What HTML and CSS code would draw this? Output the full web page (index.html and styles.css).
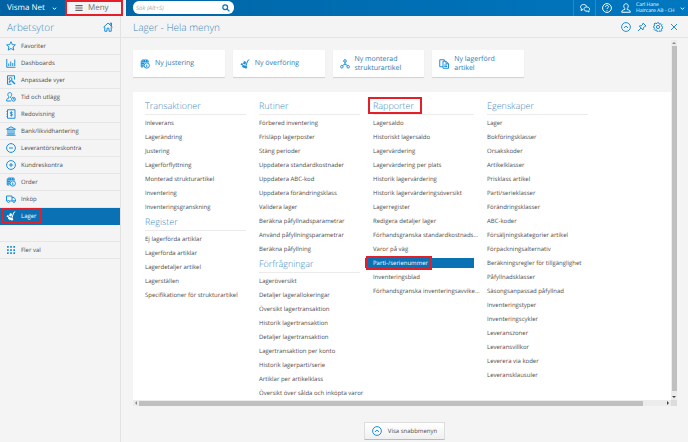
FILE: index.html
```html
<!DOCTYPE html>
<html lang="sv">
<head>
<meta charset="utf-8">
<title>Visma Net - Lager</title>
<link rel="stylesheet" href="styles.css">
</head>
<body>

<svg class="defs" aria-hidden="true">
	<symbol id="i-star" viewBox="0 0 20 20"><path d="M10 1.500l2.600 5.700 6.200.6-4.700 4.200 1.500 6.200L10 15l-5.600 3.200L5.900 12 1.200 7.800l6.200-.6z"/></symbol>
	<symbol id="i-chart" viewBox="0 0 20 20"><path d="M1.500 2v16.500h17.500M5.500 16v-5M9.500 16V7M13.500 16v-6M17.500 16V3"/></symbol>
	<symbol id="i-view" viewBox="0 0 20 20"><path d="M17 9V1.500H3v17h8"/><circle cx="9" cy="8" r="3"/><path d="M11 11l7 7M6 15l3-3" stroke-width="3"/></symbol>
	<symbol id="i-time" viewBox="0 0 20 20"><path d="M7.500 1.200c5 0 4.500 6 1.800 8.500v2.300M7.500 1.200c-5 0-4.500 6-1.800 8.500v2.300c-3 1-4.500 1.500-4.500 6h9"/><circle cx="15" cy="14.500" r="3.800"/><path d="M15 12.500v2h2"/></symbol>
	<symbol id="i-book" viewBox="0 0 20 20"><path d="M3 1.500h15v17H3zM1 5h3M1 10h3M1 15h3"/><path d="M13 7c-1-1.400-4.500-1.200-4.500.9s4.500 1.400 4.500 3.600-3.700 2.200-4.700.6M10.700 5v10"/></symbol>
	<symbol id="i-bank" viewBox="0 0 20 20"><path d="M1 6.500L10 1.500l9 5zM1 18.500h18M3 16h14M4 7v8.500M8 7v8.500M12 7v8.500M16 7v8.500"/></symbol>
	<symbol id="i-minus" viewBox="0 0 20 20"><circle cx="10" cy="10" r="8.800"/><path d="M6 10h8"/></symbol>
	<symbol id="i-plus" viewBox="0 0 20 20"><circle cx="10" cy="10" r="8.800"/><path d="M6 10h8M10 6v8"/></symbol>
	<symbol id="i-order" viewBox="0 0 20 20"><path d="M6 16H2.500V5l2-3h11l1 3v2M2.500 5.500h14M6 2v14M2.500 9H8M2.500 12.500H7M9 2v5M13 2v4"/><circle cx="13.500" cy="13" r="5.300"/><path d="M13.500 10v.8M13.500 12v4"/></symbol>
	<symbol id="i-truck" viewBox="0 0 20 20"><path d="M3 14H1V4h11v10H7M12 7h4l3 4v3h-1M12 14h2"/><circle cx="5" cy="15" r="2"/><circle cx="16" cy="15" r="2"/></symbol>
	<symbol id="i-stock" viewBox="0 0 20 20"><path d="M18.500 1.500l-3 1.500-4 12-4 2.500"/><path class="fill" d="M8 4l4.500 2-2 5.500-4.500-2zM3 8l3 1.500-1 3.500L1 11.500zM5.500 11.500l5 2-1.500 4.500-5-2zM12 14a2.500 2.500 0 1 1-.1 5 2.500 2.500 0 0 1 .1-5z"/></symbol>
	<symbol id="i-grid" viewBox="0 0 20 20"><path class="fill" d="M2 2h3.500v3.500H2zM8.300 2h3.500v3.500H8.300zM14.600 2h3.500v3.500h-3.500zM2 8.300h3.500v3.500H2zM8.300 8.300h3.500v3.500H8.300zM14.600 8.300h3.500v3.500h-3.500zM2 14.600h3.500v3.500H2zM8.300 14.600h3.500v3.500H8.300zM14.600 14.600h3.500v3.500h-3.500z"/></symbol>
	<symbol id="i-home" viewBox="0 0 20 20"><path d="M1 10.500L10 2l9 8.500M3.500 9v9.500H8v-6h4v6h4.500V9M14.500 5.500V2H17v6"/></symbol>
	<symbol id="i-tree" viewBox="0 0 20 20"><circle cx="10" cy="4" r="2.600"/><circle cx="3.700" cy="15.500" r="2.600"/><circle cx="16.300" cy="15.500" r="2.600"/><path d="M10 6.600v4M5 13l5-3 5 3"/></symbol>
	<symbol id="i-copy" viewBox="0 0 20 20"><path d="M8 15.500H1.500v-14h9V4M8 4.500h6l5 5v9H8zM14 4.500v5h5M10.500 12h6M10.500 15h6"/></symbol>
	<symbol id="i-up" viewBox="0 0 20 20"><circle cx="10" cy="10" r="8.800"/><path d="M6 11.800l4-3.600 4 3.600"/></symbol>
	<symbol id="i-pin" viewBox="0 0 20 20"><path d="M12 2l6 6-2 .5-3.500 3.500-.5 4L4.500 8l4-.5L12 4zM8 12l-6 6"/></symbol>
	<symbol id="i-gear" viewBox="0 0 20 20"><path d="M8.500 1h3l.5 2.300 2 .8 2-1.300 2 2-1.200 2.200.8 1.800 2.200.5v2.400l-2.200.6-.8 2 1.200 2-2.100 2-2-1.200-1.900.8-.5 2.400h-3L8 16l-2-.8-2 1.300-2-2 1.200-2.200-.8-1.900L.5 10V8l2-.4.8-2L2 3.500l2.200-2L6 2.800l2-.6z" transform="translate(0 .5)"/><circle cx="10" cy="10" r="3.200"/></symbol>
	<symbol id="i-close" viewBox="0 0 20 20"><path d="M4 4l12 12M16 4L4 16"/></symbol>
	<symbol id="i-chat" viewBox="0 0 20 20"><path d="M6 13l-4 2 1-3.500C-1 8 2 3 7 3c4 0 6 2 6 4"/><path d="M13 8c7 0 7.500 5.500 4.500 7.500l.5 2.500-3-1.500C6 17 6 8 13 8z"/></symbol>
	<symbol id="i-help" viewBox="0 0 20 20"><circle cx="10" cy="10" r="8.800"/><path d="M7 8c0-4 6-4 6-.5 0 2-3 2.200-3 4.500M10 14v1.500"/></symbol>
	<symbol id="i-user" viewBox="0 0 20 20"><path d="M7.500 11C4 7 5.500 1.500 10 1.500S16 7 12.500 11v2c4 1 6 1.500 6 5.500h-17c0-4 2-4.500 6-5.500z"/></symbol>
	<symbol id="i-search" viewBox="0 0 20 20"><circle cx="8" cy="8" r="6"/><path d="M12.500 12.500l6 6"/></symbol>
	<symbol id="i-down" viewBox="0 0 20 20"><path d="M3 7l7 6 7-6"/></symbol>
	<symbol id="i-bars" viewBox="0 0 20 20"><path d="M1 4h18M1 10h18M1 16h18"/></symbol>
</svg>

<header class="topbar">
	<button class="brand">Visma Net <svg class="icon tiny"><use href="#i-down"/></svg></button>
	<div class="menu-wrap">
		<button class="menu mark"><svg class="icon small"><use href="#i-bars"/></svg>Meny</button>
	</div>
	<form class="search">
		<input type="text" aria-label="Sök" placeholder="Sök (Alt+S)">
		<svg class="icon small"><use href="#i-search"/></svg>
	</form>
	<div class="tools">
		<button aria-label="Meddelanden"><svg class="icon"><use href="#i-chat"/></svg></button>
		<button aria-label="Hjälp"><svg class="icon"><use href="#i-help"/></svg></button>
		<button class="user"><svg class="icon"><use href="#i-user"/></svg><span>Carl Hane<br>Haircare AB - CH</span><svg class="icon tiny"><use href="#i-down"/></svg></button>
	</div>
</header>

<div class="layout">
	<aside class="sidebar">
		<div class="bar">
			<h2 class="title">Arbetsytor</h2>
			<a href="#" class="home" aria-label="Hem"><svg class="icon"><use href="#i-home"/></svg></a>
		</div>
		<nav class="areas">
			<a href="#"><svg class="icon"><use href="#i-star"/></svg>Favoriter</a>
			<a href="#"><svg class="icon"><use href="#i-chart"/></svg>Dashboards</a>
			<a href="#"><svg class="icon"><use href="#i-view"/></svg>Anpassade vyer</a>
			<a href="#"><svg class="icon"><use href="#i-time"/></svg>Tid och utlägg</a>
			<a href="#"><svg class="icon"><use href="#i-book"/></svg>Redovisning</a>
			<a href="#"><svg class="icon"><use href="#i-bank"/></svg>Bank/likvidhantering</a>
			<a href="#"><svg class="icon"><use href="#i-minus"/></svg>Leverantörsreskontra</a>
			<a href="#"><svg class="icon"><use href="#i-plus"/></svg>Kundreskontra</a>
			<a href="#"><svg class="icon"><use href="#i-order"/></svg>Order</a>
			<a href="#"><svg class="icon"><use href="#i-truck"/></svg>Inköp</a>
			<a href="#" class="active"><span class="mark"><svg class="icon"><use href="#i-stock"/></svg>Lager</span></a>
			<div class="spacer"></div>
			<a href="#"><svg class="icon"><use href="#i-grid"/></svg>Fler val</a>
		</nav>
	</aside>

	<main class="main">
		<div class="bar">
			<h1 class="title">Lager - Hela menyn</h1>
			<div class="actions">
				<button aria-label="Fäll ihop"><svg class="icon"><use href="#i-up"/></svg></button>
				<button aria-label="Fäst"><svg class="icon"><use href="#i-pin"/></svg></button>
				<button aria-label="Inställningar"><svg class="icon"><use href="#i-gear"/></svg></button>
				<button aria-label="Stäng"><svg class="icon"><use href="#i-close"/></svg></button>
			</div>
		</div>

		<div class="scroller">
			<div class="content">
				<div class="cards">
					<a href="#" class="card"><svg class="icon"><use href="#i-order"/></svg>Ny justering</a>
					<a href="#" class="card"><svg class="icon"><use href="#i-stock"/></svg>Ny överföring</a>
					<a href="#" class="card"><svg class="icon"><use href="#i-tree"/></svg>Ny monterad<br>strukturartikel</a>
					<a href="#" class="card"><svg class="icon"><use href="#i-copy"/></svg>Ny lagerförd<br>artikel</a>
				</div>
				<div class="panel">
					<section class="column">
						<h3>Transaktioner</h3>
						<ul>
							<li><a href="#">Inleverans</a></li>
							<li><a href="#">Lagerändring</a></li>
							<li><a href="#">Justering</a></li>
							<li><a href="#">Lagerförflyttning</a></li>
							<li><a href="#">Monterad strukturartikel</a></li>
							<li><a href="#">Inventering</a></li>
							<li><a href="#">Inventeringsgranskning</a></li>
						</ul>
						<h3>Register</h3>
						<ul>
							<li><a href="#">Ej lagerförda artiklar</a></li>
							<li><a href="#">Lagerförda artiklar</a></li>
							<li><a href="#">Lagerdetaljer artikel</a></li>
							<li><a href="#">Lagerställen</a></li>
							<li><a href="#">Specifikationer för strukturartikel</a></li>
						</ul>
					</section>
					<section class="column">
						<h3>Rutiner</h3>
						<ul>
							<li><a href="#">Förbered inventering</a></li>
							<li><a href="#">Frisläpp lagerposter</a></li>
							<li><a href="#">Stäng perioder</a></li>
							<li><a href="#">Uppdatera standardkostnader</a></li>
							<li><a href="#">Uppdatera ABC-kod</a></li>
							<li><a href="#">Uppdatera förändringsklass</a></li>
							<li><a href="#">Validera lager</a></li>
							<li><a href="#">Beräkna påfyllnadsparametrar</a></li>
							<li><a href="#">Använd påfyllningsparametrar</a></li>
							<li><a href="#">Beräkna påfyllning</a></li>
						</ul>
						<h3>Förfrågningar</h3>
						<ul>
							<li><a href="#">Lageröversikt</a></li>
							<li><a href="#">Detaljer lagerallokeringar</a></li>
							<li><a href="#">Översikt lagertransaktion</a></li>
							<li><a href="#">Historik lagertransaktion</a></li>
							<li><a href="#">Detaljer lagertransaktion</a></li>
							<li><a href="#">Lagertransaktion per konto</a></li>
							<li><a href="#">Historik lagerparti/serie</a></li>
							<li><a href="#">Artiklar per artikelklass</a></li>
							<li><a href="#">Översikt över sålda och inköpta varor</a></li>
						</ul>
					</section>
					<section class="column">
						<h3><span class="mark">Rapporter</span></h3>
						<ul>
							<li><a href="#">Lagersaldo</a></li>
							<li><a href="#">Historiskt lagersaldo</a></li>
							<li><a href="#">Lagervärdering</a></li>
							<li><a href="#">Lagervärdering per plats</a></li>
							<li><a href="#">Historik lagervärdering</a></li>
							<li><a href="#">Historik lagervärderingsöversikt</a></li>
							<li><a href="#">Lagerregister</a></li>
							<li><a href="#">Redigera detaljer lager</a></li>
							<li><a href="#">Förhandsgranska standardkostnads...</a></li>
							<li><a href="#">Varor på väg</a></li>
							<li class="selected"><a href="#" class="mark">Parti-/serienummer</a></li>
							<li><a href="#">Inventeringsblad</a></li>
							<li><a href="#">Förhandsgranska inventeringsavvike...</a></li>
						</ul>
					</section>
					<section class="column">
						<h3>Egenskaper</h3>
						<ul>
							<li><a href="#">Lager</a></li>
							<li><a href="#">Bokföringsklasser</a></li>
							<li><a href="#">Orsakskoder</a></li>
							<li><a href="#">Artikelklasser</a></li>
							<li><a href="#">Prisklass artikel</a></li>
							<li><a href="#">Parti/serieklasser</a></li>
							<li><a href="#">Förändringsklasser</a></li>
							<li><a href="#">ABC-koder</a></li>
							<li><a href="#">Försäljningskategorier artikel</a></li>
							<li><a href="#">Förpackningsalternativ</a></li>
							<li><a href="#">Beräkningsregler för tillgänglighet</a></li>
							<li><a href="#">Påfyllnadsklasser</a></li>
							<li><a href="#">Säsongsanpassad påfyllnad</a></li>
							<li><a href="#">Inventeringstyper</a></li>
							<li><a href="#">Inventeringscykler</a></li>
							<li><a href="#">Leveranszoner</a></li>
							<li><a href="#">Leveransvillkor</a></li>
							<li><a href="#">Leverera via koder</a></li>
							<li><a href="#">Leveransklausuler</a></li>
						</ul>
					</section>
				</div>
			</div>
			<div class="vbar"><i class="arrow up"></i><span></span><i class="arrow down"></i></div>
			<div class="hbar"><i class="arrow left"></i><span></span><i class="arrow right"></i></div>
			<div class="corner"></div>
		</div>

		<footer class="footer">
			<button class="quick"><svg class="icon"><use href="#i-up"/></svg>Visa snabbmenyn</button>
		</footer>
	</main>
</div>

</body>
</html>
```
FILE: styles.css
```css
* {
	box-sizing: border-box;
}

body {
	margin: 0;
	min-height: 100vh;
	display: flex;
	flex-direction: column;
	background: #f4f4f4;
	color: #4c4c4c;
	font: 6px/10px "Open Sans", "Noto Sans", sans-serif;
	text-rendering: geometricPrecision;
}

h1, h2, h3, ul {
	margin: 0;
	padding: 0;
	list-style: none;
}

h1, h2, h3 {
	font-weight: 300;
}

a {
	color: inherit;
	text-decoration: none;
}

button {
	display: flex;
	align-items: center;
	padding: 0;
	border: 0;
	background: none;
	color: inherit;
	font: inherit;
	text-rendering: inherit;
}

.defs {
	display: none;
}

.icon {
	flex: none;
	width: 10px;
	height: 10px;
	fill: none;
	color: #1c8fdb;
	stroke: currentColor;
	stroke-width: 2;
}

.fill {
	fill: currentColor;
	stroke: none;
}

.small {
	width: 8px;
	height: 8px;
}

.tiny {
	width: 5px;
	height: 5px;
	stroke-width: 4;
}

.mark {
	border: 2px solid #e3202a;
}

/* top bar */
.topbar {
	display: flex;
	height: 16px;
	background: linear-gradient(90deg, #0062a2, #0077c0);
	color: #fff;
}

.topbar .icon {
	color: #fff;
}

.brand {
	width: 65px;
	padding-left: 7px;
	gap: 7px;
	font-size: 8px;
}

.menu-wrap {
	width: 61px;
	background: #f4f4f4;
}

.menu {
	width: 58px;
	height: 16px;
	padding-left: 8px;
	gap: 5px;
	border: 2px solid #e3202a;
	color: #707070;
	font-size: 8px;
}

.topbar .menu .icon {
	color: #666;
	stroke-width: 3;
}

.search {
	display: flex;
	align-items: center;
	width: 101px;
	height: 13px;
	margin: 1px 0 0 7px;
	padding: 0 4px 0 3px;
	border-radius: 6px;
	background: #fff;
}

.search input {
	flex: 1;
	min-width: 0;
	padding: 0;
	border: 0;
	background: none;
	font: italic 6px/10px "Open Sans", "Noto Sans", sans-serif;
	text-rendering: inherit;
}

.search input::placeholder {
	color: #aaa;
}

.topbar .search .icon {
	color: #0077c0;
	stroke-width: 3;
}

.tools {
	display: flex;
	margin-left: auto;
}

.tools button {
	width: 22px;
	justify-content: center;
	border-left: 1px solid #2b89c6;
}

.tools .user {
	width: 71px;
	justify-content: flex-start;
	padding-left: 4px;
	gap: 5px;
	border-left: 0;
	font-size: 5px;
	line-height: 6px;
	text-align: left;
	white-space: nowrap;
}

.user .tiny {
	margin: 0 4px 0 auto;
}

/* page */
.layout {
	flex: 1;
	display: flex;
}

.bar {
	display: flex;
	align-items: center;
	justify-content: space-between;
	height: 22px;
	border-bottom: 1px solid #e4e4e4;
}

.title {
	color: #4189bd;
	font-size: 10px;
}

.home {
	display: flex;
}

.sidebar {
	flex: none;
	width: 121px;
	border-right: 1px solid #e2e2e2;
}

.sidebar .bar {
	padding: 0 7px;
}

.areas a, .spacer {
	display: flex;
	align-items: center;
	height: 17px;
	padding-left: 6px;
	gap: 5px;
	border-bottom: 1px solid #e6e6e6;
}

.areas .active {
	padding-left: 1px;
	border-color: #0a71b4;
	background: #0a71b4;
	color: #fff;
}

.active .mark {
	display: flex;
	align-items: center;
	width: 40px;
	height: 16px;
	padding-left: 3px;
	gap: 5px;
}

.active .icon {
	color: #fff;
}

.main {
	flex: 1;
	min-width: 0;
	display: flex;
	flex-direction: column;
}

.main .bar {
	padding: 0 9px 0 12px;
}

.actions {
	display: flex;
	gap: 6px;
}

.scroller {
	flex: 1;
	display: grid;
	grid-template: 1fr 6px / 1fr 6px;
	margin: 2px 11px 0 12px;
}

.content {
	display: flex;
	flex-direction: column;
}

.cards {
	display: grid;
	grid-template-columns: repeat(4, 1fr);
	gap: 8px;
	width: 391px;
	margin: 10px 0 15px;
}

.card {
	display: flex;
	align-items: center;
	gap: 5px;
	height: 27px;
	padding: 0 7px;
	background: #fff;
	border-radius: 1px;
	box-shadow: 0 1px 1px #d0d0d0;
	color: #2c7cb4;
	font-size: 7px;
	line-height: 9px;
}

.panel {
	flex: 1;
	display: grid;
	grid-template-columns: repeat(4, 101px);
	gap: 13px;
	padding: 7px 12px 0;
	background: #fff;
}

.column {
	white-space: nowrap;
}

.column h3 {
	height: 16px;
	margin-bottom: 1px;
	border-bottom: 1px solid #ebebeb;
	color: #4189bd;
	font-size: 9px;
	line-height: 14px;
}

.column ul + h3 {
	margin-top: 1px;
}

.column h3 .mark {
	margin-left: -5px;
	padding: 0 6px 0 3px;
}

.column li {
	height: 14px;
	padding: 2px 0;
}

.column .selected {
	margin-left: -9px;
	padding-left: 1px;
	background: #0a71b4 content-box;
	color: #fff;
}

.selected .mark {
	display: inline-block;
	height: 14px;
	margin: -2px 0 0 1px;
	padding: 0 2px 0 5px;
}

/* scroll bars */
.vbar, .hbar {
	display: flex;
	align-items: center;
	background: #ececec;
}

.vbar {
	flex-direction: column;
}

.vbar span, .hbar span {
	flex: 1;
	background: #bfbfbf;
}

.vbar span {
	width: 5px;
	margin: 2px 0 5px;
}

.hbar span {
	height: 5px;
	margin: 0 24px 0 2px;
}

.arrow {
	border: 2px solid transparent;
}

.up {
	border-bottom-color: #888;
}

.down {
	border-top-color: #444;
}

.left {
	border-right-color: #888;
}

.right {
	border-left-color: #444;
}

.corner {
	background: #dcdcdc;
}

.footer {
	display: flex;
	justify-content: center;
	padding: 16px 0 3px;
}

.quick {
	height: 18px;
	padding: 0 7px;
	gap: 6px;
	border: 1px solid #ddd;
	border-bottom-color: #bbb;
	border-radius: 1px;
	background: linear-gradient(#fff, #f0f0f0);
}
```
